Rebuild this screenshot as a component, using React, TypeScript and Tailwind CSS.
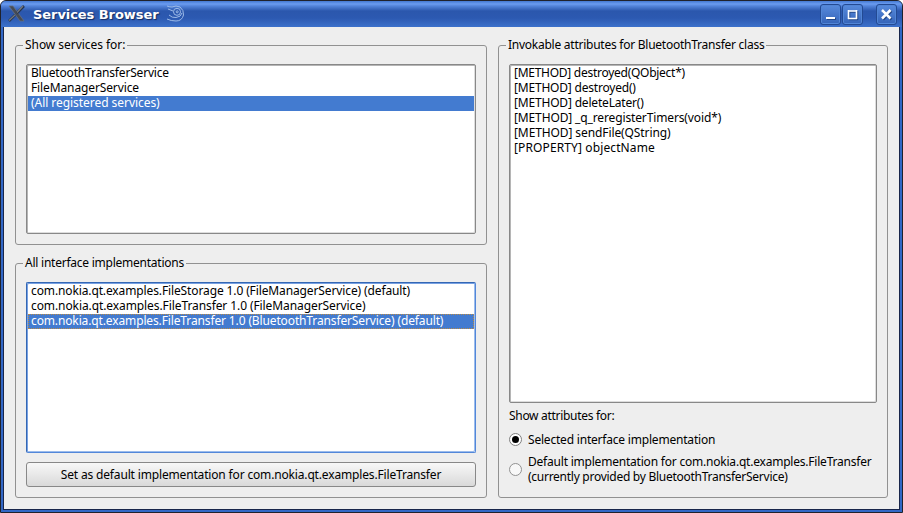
import type { ReactNode } from "react";

type Item = { text: string; tracking: string };

function Group({ title, tracking, className, children }: { title: string; tracking: string; className: string; children: ReactNode }) {
  return (
    <section className={`rounded-[3px] border border-[#919191] px-[10px] ${className}`}>
      <h2 className={`-mt-[9px] -ml-[3px] h-[18px] w-fit bg-[#eeeeee] pr-[2px] pl-[2px] leading-[16px] ${tracking}`}>{title}</h2>
      {children}
    </section>
  );
}

function List({ items, selected, focused, className }: { items: Item[]; selected?: number; focused?: boolean; className: string }) {
  return (
    <ul
      className={`mt-[9px] rounded-[2px] border bg-white pt-px ${
        focused
          ? "border-[#3467b4] border-r-[#5287d9] border-b-[#5287d9] shadow-[inset_1px_1px_0_#78a1e2,inset_-1px_-1px_0_#9cbcec]"
          : "border-[#888888] shadow-[inset_1px_1px_0_#b5b5b5,inset_-1px_-1px_0_#dddddd]"
      } ${className}`}
    >
      {items.map((item, i) => (
        <li
          key={i}
          className={`mx-px h-[15px] pl-[3px] leading-[13px] ${item.tracking} ${
            i === selected ? "bg-[#437bd0] text-white" : ""
          } ${i === selected && focused ? "outline-1 -outline-offset-1 outline-dotted outline-[#b98b48]" : ""}`}
        >
          {item.text}
        </li>
      ))}
    </ul>
  );
}

function WindowButton({ label, className, children }: { label: string; className: string; children: ReactNode }) {
  return (
    <button
      aria-label={label}
      className={`mt-px flex h-[21px] w-[21px] items-center justify-center rounded-[3px] border border-[#234a93] bg-linear-to-b from-[#588bdd] to-[#3564b8] shadow-[inset_0_0_0_1px_#5185d6] ${className}`}
    >
      <svg width="19" height="19" viewBox="0 0 19 19" className="shrink-0 fill-none stroke-white drop-shadow-[1px_1px_0_#244887]">
        {children}
      </svg>
    </button>
  );
}

export default function App() {
  return (
    <div className="h-[513px] w-[903px] bg-white">
      <main className="flex h-[513px] flex-col overflow-hidden rounded-t-[6px] border border-[#20222c] bg-[#3267c5] font-['Noto_Sans','Open_Sans',sans-serif] text-[12px] whitespace-nowrap text-black">
        <header className="flex h-[26px] shrink-0 items-center bg-[linear-gradient(#4378d1_0px,#6b9cf0_3px,#5384da_5px,#2b57ad_10px,#2c59b1_17px,#3c71cb_26px)] pl-[7px]">
          <svg width="17" height="18" viewBox="0 0 17 18" className="shrink-0">
            <path d="M1 1H5L16 16H12Z" fill="#454b55" stroke="#6b7380" strokeWidth=".7" />
            <path d="M16 1L9 8M7 10L1 16" stroke="#25344f" strokeWidth="2.6" />
            <path d="M15 1L9 7.5M7 10L1 15.5" stroke="#73777c" strokeWidth="1.3" />
          </svg>
          <h1 className="mt-[2px] ml-[8px] w-[126px] font-['DejaVu_Sans',sans-serif] text-[13px] leading-[18px] font-bold tracking-[-0.06px] text-white [text-shadow:1px_1px_1px_#142c60]">
            Services Browser
          </h1>
          <svg width="19" height="20" viewBox="0 0 19 20" className="ml-[7px] shrink-0 fill-none stroke-[#9dbbe8]">
            <path d="M1 2Q4 3 6 3Q10 1 14 3Q18 6 17.5 11Q16 17 10 17Q5 17 1 15M2 5L7 7M3 11Q6 14 10 13.5Q15 13 16 9" strokeWidth="1" />
            <circle cx="11" cy="7.8" r="3.5" />
            <circle cx="11.2" cy="7.8" r="1" />
          </svg>
          <WindowButton label="Minimize" className="ml-auto">
            <path d="M5 13H14" strokeWidth="2" />
          </WindowButton>
          <WindowButton label="Maximize" className="ml-px">
            <path d="M5 6H14M5 13.5H14M5.5 5V14M13.5 5V14" strokeWidth="1.6" />
          </WindowButton>
          <WindowButton label="Close" className="mr-[5px] ml-[13px]">
            <path d="M5 5L13.5 13.5M13.5 5L5 13.5" strokeWidth="2.5" />
          </WindowButton>
        </header>
        <div className="mx-[2px] mb-[2px] flex flex-1 gap-[11px] border border-t-0 border-[#18254a] bg-[#eeeeee] px-[11px] pt-[18px]">
          <div className="flex w-[472px] flex-col gap-[18px]">
            <Group title="Show services for:" tracking="tracking-[-0.05px]" className="h-[200px]">
              <List
                className="h-[170px]"
                selected={2}
                items={[
                  { text: "BluetoothTransferService", tracking: "tracking-[-0.18px]" },
                  { text: "FileManagerService", tracking: "tracking-[-0.12px]" },
                  { text: "(All registered services)", tracking: "tracking-[-0.05px]" },
                ]}
              />
            </Group>
            <Group title="All interface implementations" tracking="tracking-[-0.24px]" className="h-[235px]">
              <List
                className="h-[171px]"
                focused
                selected={2}
                items={[
                  { text: "com.nokia.qt.examples.FileStorage 1.0 (FileManagerService) (default)", tracking: "tracking-[-0.12px]" },
                  { text: "com.nokia.qt.examples.FileTransfer 1.0 (FileManagerService)", tracking: "tracking-[-0.09px]" },
                  { text: "com.nokia.qt.examples.FileTransfer 1.0 (BluetoothTransferService) (default)", tracking: "tracking-[-0.13px]" },
                ]}
              />
              <button className="mt-[9px] h-[25px] w-full rounded-[3px] border border-[#888888] bg-linear-to-b from-[#f8f8f8] to-[#d9d9d9] leading-[21px] tracking-[-0.16px]">
                Set as default implementation for com.nokia.qt.examples.FileTransfer
              </button>
            </Group>
          </div>
          <Group title="Invokable attributes for BluetoothTransfer class" tracking="tracking-[-0.25px]" className="h-[453px] w-[390px]">
            <List
              className="h-[339px]"
              items={[
                { text: "[METHOD] destroyed(QObject*)", tracking: "tracking-[-0.27px]" },
                { text: "[METHOD] destroyed()", tracking: "tracking-[-0.2px]" },
                { text: "[METHOD] deleteLater()", tracking: "tracking-[-0.18px]" },
                { text: "[METHOD] _q_reregisterTimers(void*)", tracking: "tracking-[-0.13px]" },
                { text: "[METHOD] sendFile(QString)", tracking: "tracking-[-0.1px]" },
                { text: "[PROPERTY] objectName", tracking: "tracking-[0.12px]" },
              ]}
            />
            <p className="mt-[5px] leading-[15px] tracking-[-0.3px]">Show attributes for:</p>
            <label className="mt-[8px] flex h-[16px] items-center leading-[15px]">
              <span className="flex h-[13px] w-[13px] items-center justify-center rounded-full border border-[#808080] bg-white">
                <span className="h-[7px] w-[7px] rounded-full bg-black" />
              </span>
              <span className="ml-[6px] tracking-[-0.2px]">Selected interface implementation</span>
            </label>
            <label className="mt-[7px] flex h-[30px] items-center leading-[15px]">
              <span className="h-[13px] w-[13px] shrink-0 rounded-full border border-[#929292] bg-[#f8f8f8]" />
              <span className="ml-[6px] tracking-[-0.21px]">
                Default implementation for com.nokia.qt.examples.FileTransfer
                <br />
                <span className="tracking-[-0.27px]">(currently provided by BluetoothTransferService)</span>
              </span>
            </label>
          </Group>
        </div>
      </main>
    </div>
  );
}
